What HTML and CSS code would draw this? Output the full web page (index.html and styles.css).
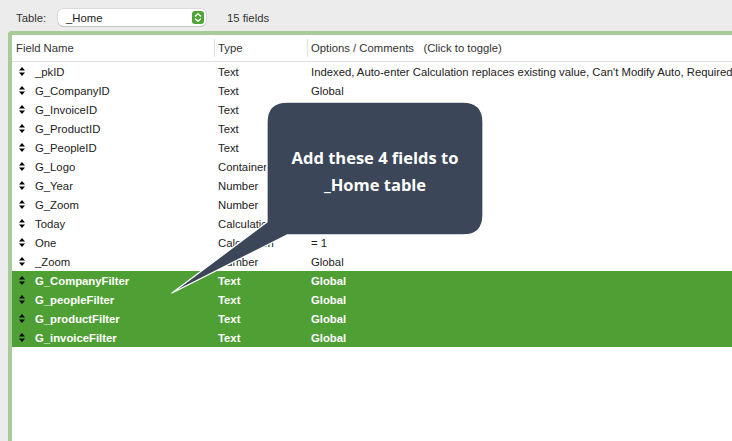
FILE: index.html
```html
<!DOCTYPE html>
<html lang="en">
<head>
  <meta charset="UTF-8">
  <meta name="viewport" content="width=device-width, initial-scale=1.0">
  <title>Manage Database - Fields</title>
  <link rel="stylesheet" href="styles.css">
</head>
<body>
  <div class="toolbar">
    <span class="label">Table:</span>
    <div class="popup">
      <span>_Home</span>
      <span class="stepper">
        <svg width="12" height="13" viewBox="0 0 12 13">
          <path d="M3.5 5 L6 2.8 L8.5 5 M3.5 8 L6 10.2 L8.5 8" fill="none" stroke="#fff" stroke-width="1.4" stroke-linecap="round" stroke-linejoin="round"/>
        </svg>
      </span>
    </div>
    <span class="count">15 fields</span>
  </div>

  <div class="panel">
    <div class="head">
      <div class="h-name">Field Name</div>
      <div class="h-type">Type</div>
      <div class="h-opts">Options / Comments &nbsp; (Click to toggle)</div>
    </div>
    <div id="rows"></div>
  </div>

  <svg class="callout" width="732" height="441" viewBox="0 0 732 441">
    <path d="M287 102 H463 Q483 102 483 122 V215 Q483 235 463 235 H287 L172 293 L267 222 V122 Q267 102 287 102 Z" fill="#3b4658" stroke="#fff" stroke-width="1.3" stroke-linejoin="round"/>
  </svg>
  <div class="callout-text">Add these 4 fields to<br>_Home table</div>

  <script>
    const fields = [
      ["_pkID", "Text", "Indexed, Auto-enter Calculation replaces existing value, Can't Modify Auto, Required Value, Unique Value"],
      ["G_CompanyID", "Text", "Global"],
      ["G_InvoiceID", "Text", "Global"],
      ["G_ProductID", "Text", "Global"],
      ["G_PeopleID", "Text", "Global"],
      ["G_Logo", "Container", "Global"],
      ["G_Year", "Number", "Global"],
      ["G_Zoom", "Number", "Global"],
      ["Today", "Calculation", "Unstored, = Get ( CurrentDate )"],
      ["One", "Calculation", "= 1"],
      ["_Zoom", "Number", "Global"],
      ["G_CompanyFilter", "Text", "Global", true],
      ["G_peopleFilter", "Text", "Global", true],
      ["G_productFilter", "Text", "Global", true],
      ["G_invoiceFilter", "Text", "Global", true]
    ];

    const arrow = '<svg width="6" height="9" viewBox="0 0 6 9"><path d="M3 0 L6 3.6 H0 Z M3 9 L6 5.4 H0 Z" fill="#000"/></svg>';
    const rows = document.getElementById("rows");

    fields.forEach(f => {
      const row = document.createElement("div");
      row.className = f[3] ? "row selected" : "row";
      row.innerHTML = '<div class="grip">' + arrow + '</div>' +
        '<div class="name">' + f[0] + '</div>' +
        '<div class="type">' + f[1] + '</div>' +
        '<div class="opts">' + f[2] + '</div>';
      rows.appendChild(row);
    });
  </script>
</body>
</html>
```

FILE: styles.css
```css
body {
  margin: 0;
  width: 732px;
  height: 441px;
  overflow: hidden;
  background: #ececec;
  font-family: "Liberation Sans", Arial, sans-serif;
  font-size: 11.3px;
  color: #222;
  position: relative;
}
.toolbar {
  height: 31px;
  display: flex;
  align-items: center;
  padding-left: 16px;
  padding-top: 4px;
  box-sizing: border-box;
}
.label {
  width: 42px;
  color: #333;
}
.popup {
  width: 148px;
  height: 17px;
  background: #fff;
  border-radius: 5px;
  box-shadow: 0 0 0 0.5px rgba(0,0,0,0.15), 0 1px 1px rgba(0,0,0,0.12);
  display: flex;
  align-items: center;
  justify-content: space-between;
  padding: 0 2px 0 8px;
  box-sizing: border-box;
}
.stepper {
  width: 12px;
  height: 13px;
  background: #4fa437;
  border-radius: 3px;
  display: flex;
}
.count {
  margin-left: 21px;
  color: #333;
}
.panel {
  margin-left: 8px;
  height: 410px;
  background: #fff;
  border-left: 4px solid #a8cc99;
  border-top: 4px solid #a8cc99;
  border-top-left-radius: 4px;
  overflow: hidden;
}
.head {
  height: 26px;
  display: flex;
  align-items: center;
  border-bottom: 1px solid #e2e2e2;
  color: #333;
  white-space: nowrap;
}
.h-name {
  width: 198px;
  padding-left: 4px;
  flex-shrink: 0;
}
.h-type, .h-opts {
  border-left: 1px solid #e0e0e0;
  padding-left: 3px;
  line-height: 18px;
  flex-shrink: 0;
}
.h-type {
  width: 89px;
}
.row {
  height: 19px;
  display: flex;
  align-items: center;
  white-space: nowrap;
  overflow: hidden;
}
.grip {
  width: 23px;
  padding-left: 7px;
  box-sizing: border-box;
  display: flex;
  flex-shrink: 0;
}
.name {
  width: 183px;
  flex-shrink: 0;
}
.type {
  width: 93px;
  flex-shrink: 0;
}
.opts {
  overflow: hidden;
}
.selected {
  background: #4fa034;
  color: #fff;
  font-weight: bold;
}
.callout {
  position: absolute;
  left: 0;
  top: 0;
}
.callout-text {
  position: absolute;
  left: 267px;
  top: 144px;
  width: 216px;
  text-align: center;
  color: #fff;
  font-family: "Open Sans", sans-serif;
  font-weight: 700;
  font-size: 16.5px;
  line-height: 27px;
}
```
